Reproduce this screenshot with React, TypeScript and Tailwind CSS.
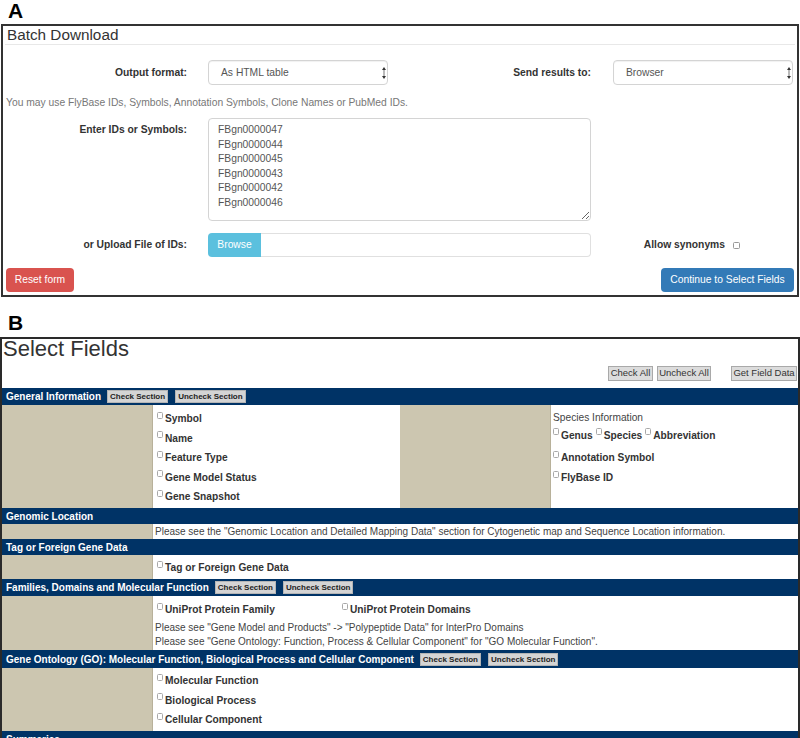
import React from 'react'

const FONT = "font-['Liberation_Sans',Arial,Helvetica,sans-serif]"

// tiny square checkbox, raised like the browser draws it next to bold labels
function Box() {
  return <span className="inline-block w-[6px] h-[7px] border border-[#a8a8a8] rounded-[1.5px] bg-white shrink-0 mb-[7px] mr-[2px]" />
}

function Field({ label, h = 'h-[19.5px]' }: { label: string; h?: string }) {
  return (
    <div className={`flex items-center ${h}`}>
      <Box />
      <span className="font-bold text-[10.2px] text-[#333]">{label}</span>
    </div>
  )
}

function SectionButtons() {
  return (
    <div className="flex items-center gap-[7px] ml-[6px]">
      <span className="h-[13px] px-[2px] bg-[#d4d4d4] border border-[#b5b5b5] text-[8px] font-bold text-[#222] leading-[11px] flex items-center">
        Check Section
      </span>
      <span className="h-[13px] px-[2px] bg-[#d4d4d4] border border-[#b5b5b5] text-[8px] font-bold text-[#222] leading-[11px] flex items-center">
        Uncheck Section
      </span>
    </div>
  )
}

function Header({ title, buttons, h }: { title: string; buttons?: boolean; h: string }) {
  return (
    <div className={`bg-[#003366] ${h} flex items-center pl-[4px] text-white font-bold text-[10px] shrink-0`}>
      <span>{title}</span>
      {buttons && <SectionButtons />}
    </div>
  )
}

function Tan({ w = 'w-[151px]' }: { w?: string }) {
  return <div className={`${w} bg-[#ccc6b0] shrink-0 border-r border-[#b8b19a]`} />
}

function SelectBox({ value }: { value: string }) {
  return (
    <div className="w-[180px] h-[25px] border border-[#d4d4d4] rounded-[4px] shadow-[inset_0_1px_1px_rgba(0,0,0,0.06)] flex items-center justify-between pl-[12px] pr-[1px] text-[10.3px] text-[#555]">
      <span>{value}</span>
      <svg width="4" height="14" viewBox="0 0 4 14">
        <path d="M2 1 L4 4 L0 4 Z" fill="#333" />
        <rect x="1.5" y="4" width="1" height="6" fill="#777" />
        <path d="M0 10 L4 10 L2 13 Z" fill="#333" />
      </svg>
    </div>
  )
}

function BatchDownload() {
  const ids = ['FBgn0000047', 'FBgn0000044', 'FBgn0000045', 'FBgn0000043', 'FBgn0000042', 'FBgn0000046']
  return (
    <div className="mx-[1px] border-2 border-[#333] text-[10.3px] text-[#333]">
      <div className="h-[19px] mx-[2px] border-b border-[#e8e8e8] pl-[2px] text-[15.3px] leading-[18px] text-[#333]">
        Batch Download
      </div>

      <div className="flex items-center h-[25px] mt-[15px]">
        <div className="w-[184px] text-right font-bold">Output format:</div>
        <div className="ml-[21px]">
          <SelectBox value="As HTML table" />
        </div>
        <div className="w-[203px] text-right font-bold">Send results to:</div>
        <div className="ml-[22px]">
          <SelectBox value="Browser" />
        </div>
      </div>

      <div className="mt-[12px] pl-[3px] leading-[12px] text-[#777]">
        You may use FlyBase IDs, Symbols, Annotation Symbols, Clone Names or PubMed IDs.
      </div>

      <div className="flex mt-[9px]">
        <div className="w-[184px] text-right font-bold pt-[5px] leading-[14px]">Enter IDs or Symbols:</div>
        <textarea
          readOnly
          defaultValue={ids.join('\n')}
          className="ml-[21px] w-[383px] h-[103px] border border-[#d4d4d4] rounded-[4px] pl-[9px] pt-[4px] text-[10.3px] leading-[14.6px] text-[#555] outline-none"
        />
      </div>

      <div className="flex items-center h-[24px] mt-[12px]">
        <div className="w-[184px] text-right font-bold">or Upload File of IDs:</div>
        <div className="ml-[21px] flex h-[24px] w-[383px]">
          <div className="w-[53px] bg-[#5bc0de] text-white rounded-l-[4px] flex items-center justify-center">Browse</div>
          <div className="flex-1 border border-l-0 border-[#e0e0e0] rounded-r-[4px]" />
        </div>
        <div className="ml-auto flex items-center mr-[57px]">
          <span className="font-bold">Allow synonyms</span>
          <span className="ml-[8px] inline-block w-[7px] h-[7px] border border-[#999] rounded-[1.5px]" />
        </div>
      </div>

      <div className="flex items-center justify-between h-[24px] mt-[11px] mb-[3px] px-[3px]">
        <div className="w-[68px] h-[24px] bg-[#d9534f] rounded-[4px] text-white flex items-center justify-center">Reset form</div>
        <div className="w-[133px] h-[24px] bg-[#337ab7] rounded-[4px] text-white flex items-center justify-center">Continue to Select Fields</div>
      </div>
    </div>
  )
}

function TopButton({ label, w }: { label: string; w: string }) {
  return (
    <span className={`${w} h-[15px] bg-[#dcdcdc] border border-[#a9a9a9] text-[9.5px] text-[#333] flex items-center justify-center`}>
      {label}
    </span>
  )
}

function SelectFields() {
  return (
    <div className="border-2 border-[#2a2a2a] border-b-0 text-[#333]">
      <div className="h-[20px] pl-[1px] text-[22px] leading-[20px] text-[#333]">Select Fields</div>
      <div className="flex justify-end items-center mt-[7px] mb-[7px] h-[15px] pr-[1px]">
        <div className="flex gap-[4px]">
          <TopButton label="Check All" w="w-[45px]" />
          <TopButton label="Uncheck All" w="w-[54px]" />
        </div>
        <div className="ml-[20px]">
          <TopButton label="Get Field Data" w="w-[66px]" />
        </div>
      </div>

      {/* General Information */}
      <Header title="General Information" buttons h="h-[17px]" />
      <div className="flex h-[103px]">
        <Tan />
        <div className="w-[247px] bg-white pl-[4px] pt-[4px]">
          <Field label="Symbol" />
          <Field label="Name" />
          <Field label="Feature Type" />
          <Field label="Gene Model Status" />
          <Field label="Gene Snapshot" />
        </div>
        <Tan />
        <div className="flex-1 bg-white pl-[2px] pt-[4px] text-[10.2px]">
          <div className="h-[18px] flex items-center text-[#444]">Species Information</div>
          <div className="h-[17px] flex items-center gap-[3px]">
            <div className="flex items-center">
              <Box />
              <span className="font-bold">Genus</span>
            </div>
            <div className="flex items-center">
              <Box />
              <span className="font-bold">Species</span>
            </div>
            <div className="flex items-center">
              <Box />
              <span className="font-bold">Abbreviation</span>
            </div>
          </div>
          <div className="mt-[4px]">
            <Field label="Annotation Symbol" h="h-[20px]" />
            <Field label="FlyBase ID" h="h-[19px]" />
          </div>
        </div>
      </div>

      {/* Genomic Location */}
      <Header title="Genomic Location" h="h-[16px]" />
      <div className="flex h-[15px]">
        <Tan />
        <div className="flex-1 bg-white pl-[2px] text-[10px] text-[#444] flex items-center">
          Please see the "Genomic Location and Detailed Mapping Data" section for Cytogenetic map and Sequence Location information.
        </div>
      </div>

      {/* Tag or Foreign Gene Data */}
      <Header title="Tag or Foreign Gene Data" h="h-[16px]" />
      <div className="flex h-[24px]">
        <Tan />
        <div className="flex-1 bg-white pl-[4px] pt-[3px]">
          <Field label="Tag or Foreign Gene Data" />
        </div>
      </div>

      {/* Families, Domains and Molecular Function */}
      <Header title="Families, Domains and Molecular Function" buttons h="h-[17px]" />
      <div className="flex h-[54px]">
        <Tan />
        <div className="flex-1 bg-white pt-[4px] text-[10px] text-[#444]">
          <div className="flex h-[20px] pl-[4px]">
            <div className="w-[185px]">
              <Field label="UniProt Protein Family" h="h-[20px]" />
            </div>
            <Field label="UniProt Protein Domains" h="h-[20px]" />
          </div>
          <div className="h-[14px] flex items-center pl-[2px]">
            Please see "Gene Model and Products" -&gt; "Polypeptide Data" for InterPro Domains
          </div>
          <div className="h-[15px] flex items-center pl-[2px]">
            Please see "Gene Ontology: Function, Process &amp; Cellular Component" for "GO Molecular Function".
          </div>
        </div>
      </div>

      {/* Gene Ontology */}
      <Header title="Gene Ontology (GO): Molecular Function, Biological Process and Cellular Component" buttons h="h-[18px]" />
      <div className="flex h-[63px]">
        <Tan />
        <div className="flex-1 bg-white pl-[4px] pt-[3px]">
          <Field label="Molecular Function" />
          <Field label="Biological Process" />
          <Field label="Cellular Component" />
        </div>
      </div>

      <Header title="Summaries" h="h-[17px]" />
    </div>
  )
}

export default function App() {
  return (
    <div className={`w-[800px] h-[738px] overflow-hidden bg-white ${FONT}`}>
      <div className="h-[24px] pl-[8px] text-[21px] leading-[22px] font-bold text-black">A</div>
      <BatchDownload />
      <div className="h-[40px] pl-[8px] pt-[15px] text-[21px] leading-[22px] font-bold text-black">B</div>
      <SelectFields />
    </div>
  )
}
